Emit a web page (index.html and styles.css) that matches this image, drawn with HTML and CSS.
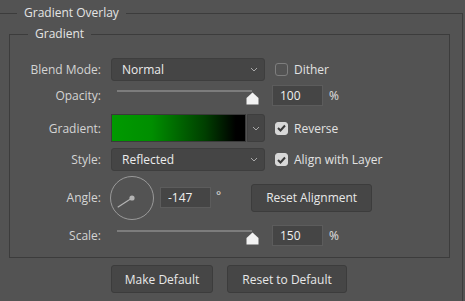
FILE: index.html
```html
<!DOCTYPE html>
<html lang="en">
<head>
    <meta charset="UTF-8">
    <title>Gradient Overlay</title>
    <link rel="stylesheet" href="styles.css">
</head>
<body>
    <fieldset class="panel">
        <legend class="panel-title">Gradient Overlay</legend>

        <fieldset class="group">
            <legend class="group-title">Gradient</legend>

            <div class="row row-blend">
                <span class="label">Blend Mode:</span>
                <div class="select">
                    <span>Normal</span>
                    <svg class="chevron" width="8" height="5" viewBox="0 0 8 5"><path d="M1 1 L4 4 L7 1" fill="none" stroke="#a8a8a8" stroke-width="1"/></svg>
                </div>
                <label class="check"><span class="box"></span>Dither</label>
            </div>

            <div class="row row-opacity">
                <span class="label">Opacity:</span>
                <div class="slider">
                    <div class="track"></div>
                    <svg class="thumb" width="13" height="13" viewBox="0 0 13 13"><path d="M6.5 0.5 L12.5 6 L12.5 12.5 L0.5 12.5 L0.5 6 Z" fill="#f2f2f2"/></svg>
                </div>
                <input class="field" type="text" value="100">
                <span class="unit">%</span>
            </div>

            <div class="row row-gradient">
                <span class="label">Gradient:</span>
                <div class="swatch"></div>
                <div class="swatch-menu">
                    <svg class="chevron" width="8" height="5" viewBox="0 0 8 5"><path d="M1 1 L4 4 L7 1" fill="none" stroke="#a8a8a8" stroke-width="1"/></svg>
                </div>
                <label class="check"><span class="box checked"><svg width="9" height="8" viewBox="0 0 9 8"><path d="M1 4 L3.5 6.5 L8 1.5" fill="none" stroke="#3a3a3a" stroke-width="2"/></svg></span>Reverse</label>
            </div>

            <div class="row row-style">
                <span class="label">Style:</span>
                <div class="select">
                    <span>Reflected</span>
                    <svg class="chevron" width="8" height="5" viewBox="0 0 8 5"><path d="M1 1 L4 4 L7 1" fill="none" stroke="#a8a8a8" stroke-width="1"/></svg>
                </div>
                <label class="check"><span class="box checked"><svg width="9" height="8" viewBox="0 0 9 8"><path d="M1 4 L3.5 6.5 L8 1.5" fill="none" stroke="#3a3a3a" stroke-width="2"/></svg></span>Align with Layer</label>
            </div>

            <div class="row row-angle">
                <span class="label">Angle:</span>
                <svg class="dial" width="46" height="46" viewBox="0 0 46 46">
                    <circle cx="23" cy="23" r="21.5" fill="none" stroke="#9a9a9a" stroke-width="1"/>
                    <line x1="23" y1="23" x2="8.7" y2="32.3" stroke="#b4b4b4" stroke-width="1.2"/>
                    <circle cx="23" cy="23" r="2.6" fill="#b4b4b4"/>
                </svg>
                <input class="field field-angle" type="text" value="-147">
                <span class="degree">°</span>
                <button class="btn btn-align">Reset Alignment</button>
            </div>

            <div class="row row-scale">
                <span class="label">Scale:</span>
                <div class="slider">
                    <div class="track"></div>
                    <svg class="thumb" width="13" height="13" viewBox="0 0 13 13"><path d="M6.5 0.5 L12.5 6 L12.5 12.5 L0.5 12.5 L0.5 6 Z" fill="#f2f2f2"/></svg>
                </div>
                <input class="field" type="text" value="150">
                <span class="unit">%</span>
            </div>
        </fieldset>

        <div class="actions">
            <button class="btn btn-make">Make Default</button>
            <button class="btn btn-reset">Reset to Default</button>
        </div>
    </fieldset>
</body>
</html>
```

FILE: styles.css
```css
* {
    margin: 0;
    padding: 0;
    box-sizing: border-box;
    font-family: 'Open Sans', 'Liberation Sans', sans-serif;
}

body {
    background-color: #535353;
    width: 465px;
    height: 301px;
    overflow: hidden;
    color: #d4d4d4;
    font-size: 12px;
}

.panel {
    margin: 5px 2px 0 -10px;
    padding: 5px 12px 20px 18px;
    border: 1px solid #3c3c3c;
}

.panel-title {
    margin-left: 8px;
    padding: 0 7px;
    line-height: 16px;
    color: #e4e4e4;
}

.group {
    padding: 16px 0 11px 0;
    border: 1px solid #3c3c3c;
}

.group-title {
    margin-left: 18px;
    padding: 0 7px;
    line-height: 16px;
    color: #e4e4e4;
}

.row {
    display: flex;
    align-items: center;
}

.row-blend { height: 23px; }
.row-opacity { height: 21px; margin-top: 4px; }
.row-gradient { height: 28px; margin-top: 8px; }
.row-style { height: 23px; margin-top: 6px; }
.row-angle { height: 45px; margin-top: 4px; }
.row-scale { height: 21px; margin-top: 5px; }

.label {
    width: 91px;
    margin-right: 10px;
    text-align: right;
    flex-shrink: 0;
}

.select {
    width: 154px;
    height: 100%;
    display: flex;
    align-items: center;
    justify-content: space-between;
    padding: 0 6px 0 10px;
    background-color: #454545;
    border: 1px solid #3e3e3e;
    border-radius: 3px;
    color: #ececec;
}

.chevron {
    display: block;
}

.check {
    display: flex;
    align-items: center;
    margin-left: 10px;
    color: #e2e2e2;
}

.box {
    width: 13px;
    height: 13px;
    margin-right: 6px;
    border: 1px solid #7e7e7e;
    border-radius: 3px;
    display: flex;
    align-items: center;
    justify-content: center;
}

.box.checked {
    background-color: #d8d8d8;
    border-color: #d8d8d8;
}

.slider {
    position: relative;
    width: 154px;
    height: 21px;
    align-self: flex-start;
}

.track {
    margin: 5px 13px 0 6px;
    height: 2px;
    background-color: #7c7c7c;
}

.thumb {
    position: absolute;
    left: 135px;
    top: 7px;
}

.field {
    width: 51px;
    height: 21px;
    margin-left: 7px;
    padding: 0 7px;
    background-color: #454545;
    border: 1px solid #5c5c5c;
    color: #f0f0f0;
    font-size: 12px;
    outline: none;
}

.unit {
    margin-left: 6px;
    color: #e0e0e0;
}

.swatch {
    width: 135px;
    height: 100%;
    border: 1px solid #3a3a3a;
    background: linear-gradient(to right, #009a00 0%, #008e00 30%, #003f00 70%, #000 93%);
}

.swatch-menu {
    width: 18px;
    height: 100%;
    margin-left: 1px;
    display: flex;
    align-items: center;
    justify-content: center;
    background-color: #454545;
    border: 1px solid #3e3e3e;
    border-radius: 0 3px 3px 0;
}

.dial {
    display: block;
    margin-left: -2px;
}

.field-angle {
    margin-left: 5px;
}

.degree {
    margin-left: 5px;
    align-self: flex-start;
    margin-top: 15px;
    line-height: 12px;
    color: #e0e0e0;
}

.btn {
    height: 28px;
    background-color: #464646;
    border: 1px solid #3c3c3c;
    border-radius: 3px;
    color: #e8e8e8;
    font-size: 12px;
}

.btn-align {
    width: 121px;
    margin-left: 30px;
}

.actions {
    display: flex;
    gap: 14px;
    margin: 7px 0 0 102px;
}

.btn-make { width: 102px; }
.btn-reset { width: 120px; }
```
